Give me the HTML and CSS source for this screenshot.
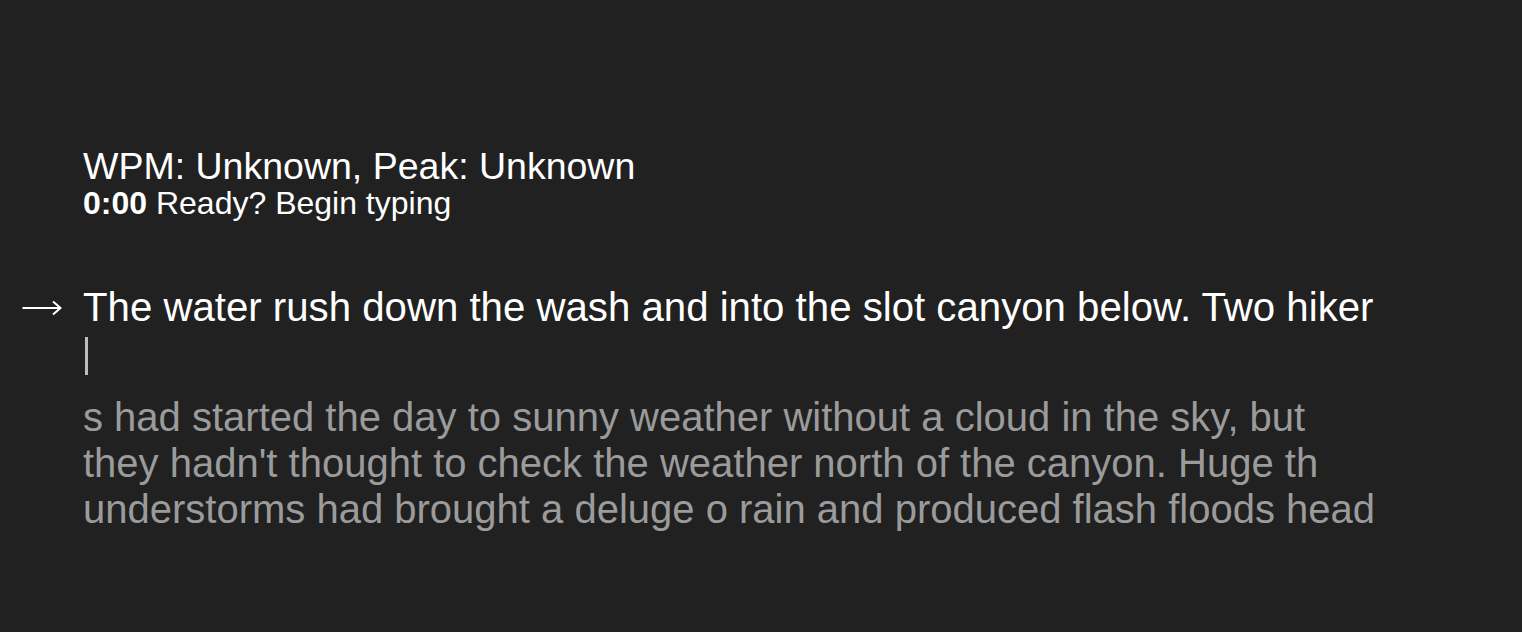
FILE: index.html
```html
<!DOCTYPE html>
<html>
<head>
<meta charset="utf-8">
<link rel="stylesheet" href="styles.css">
</head>
<body>
<main class="app">
  <section class="stats">
    <div class="wpm">WPM: Unknown, Peak: Unknown</div>
    <div class="status"><b>0:00</b> Ready? Begin typing</div>
  </section>
  <section class="typing">
    <div class="current">
      <svg class="arrow" width="40" height="16" viewBox="0 0 40 16" aria-hidden="true">
        <path d="M0.5 8 H38" stroke="#ffffff" stroke-width="2" fill="none"/>
        <path d="M31 1.5 L38.5 8 L31 14.5" stroke="#ffffff" stroke-width="2" fill="none" stroke-linejoin="miter"/>
      </svg>
      <span class="line">The water rush down the wash and into the slot canyon below. Two hiker</span>
    </div>
    <div class="cursor-row"><span class="cursor"></span></div>
    <div class="upcoming">s had started the day to sunny weather without a cloud in the sky, but<br>they hadn't thought to check the weather north of the canyon. Huge th<br>understorms had brought a deluge o rain and produced flash floods head</div>
  </section>
</main>
</body>
</html>
```
FILE: styles.css
```css
html, body {
  margin: 0;
  padding: 0;
  background: #212121;
  height: 100%;
}
body {
  font-family: "Liberation Sans", Arial, sans-serif;
  color: #ffffff;
}
.app {
  padding: 146px 0 0 83px;
}
.stats {
  display: flex;
  flex-direction: column;
}
.wpm {
  font-size: 37.5px;
  line-height: 40px;
}
.status {
  font-size: 32px;
  line-height: 34px;
}
.typing {
  margin-top: 65px;
}
.current {
  position: relative;
  font-size: 40.2px;
  line-height: 46px;
}
.arrow {
  position: absolute;
  left: -61px;
  top: 15px;
}
.cursor-row {
  height: 46px;
  padding: 6px 0 0 2px;
  box-sizing: border-box;
}
.cursor {
  display: block;
  width: 3px;
  height: 38px;
  background: #bdbdbd;
}
.upcoming {
  margin-top: 17px;
  font-size: 40px;
  line-height: 46px;
  color: #9b9b9b;
}
```
